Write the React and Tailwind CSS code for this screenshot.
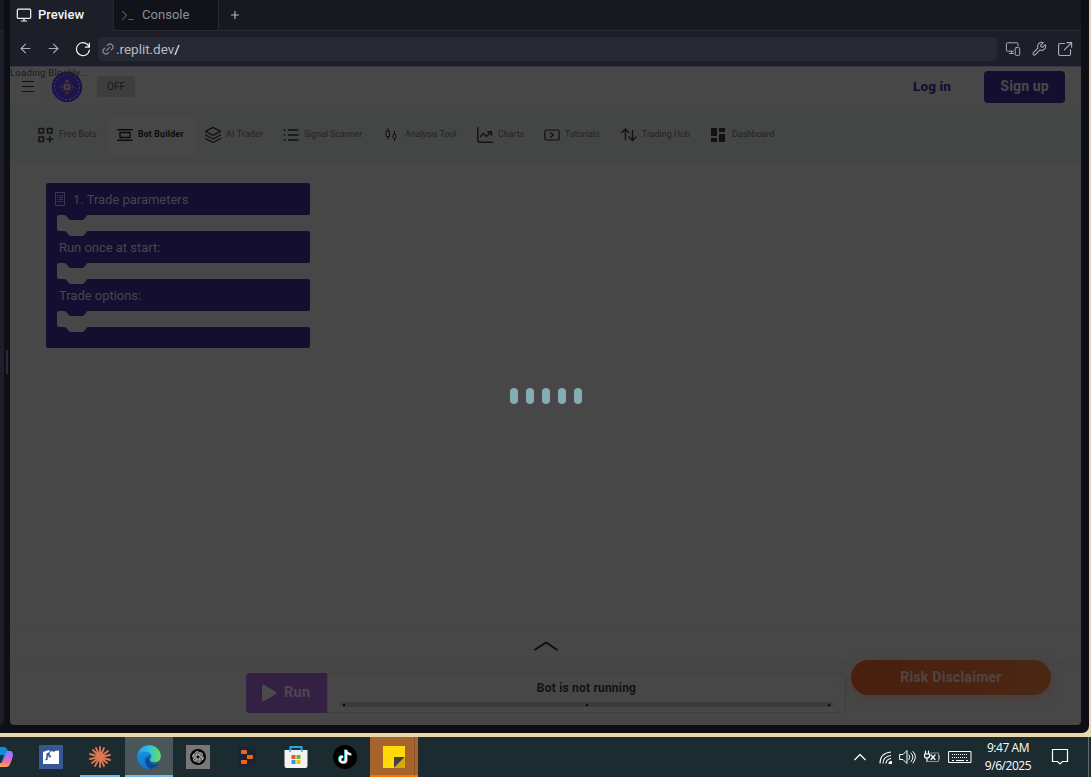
import React from "react";
import { Plus, ArrowLeft, ArrowRight, Link2 } from "lucide-react";

function Svg({ className = "", children, ...rest }) {
  return (
    <svg className={"block shrink-0 " + className} fill="none" stroke="currentColor" strokeLinecap="round" strokeLinejoin="round" {...rest}>
      {children}
    </svg>
  );
}

function TabBar() {
  return (
    <div className="flex h-[31px] shrink-0 border-b border-[#292936] bg-[#181820]">
      <div className="-mb-px flex w-[103px] items-center bg-[#1c1e28] pb-px pl-[6px] text-[#f5f5fa]">
        <Svg className="h-4 w-4" viewBox="0 0 16 16" strokeWidth="1.2">
          <rect x="1.3" y="2.2" width="13.4" height="9.2" rx="1.2" />
          <path d="M8 11.5V14M5.4 14h5.2" />
        </Svg>
        <span className="ml-[6px] text-[13px] leading-4 font-medium">Preview</span>
      </div>
      <div className="flex w-[106px] items-center border-x border-[#292936] bg-[#12121a] pl-[7px] text-[#8f909b]">
        <Svg className="h-4 w-4 text-[#625d43]" viewBox="0 0 16 16" strokeWidth="1.1">
          <path d="m1.5 4.3 4 4-4 4M7.5 12.5h5" />
        </Svg>
        <span className="ml-[5px] text-[13px] leading-4 tracking-[0.03px]">Console</span>
      </div>
      <Plus className="mt-[9px] ml-[10px] h-3 w-3 text-[#b5b6c0]" strokeWidth={2.3} />
    </div>
  );
}

function AddressBar() {
  return (
    <div className="flex h-9 shrink-0 items-center border-b border-[#363948] bg-[#1c1e28] text-[#a9abb6]">
      <ArrowLeft className="ml-[8px] h-[15px] w-[15px]" strokeWidth={1.8} />
      <ArrowRight className="ml-[13px] h-[15px] w-[15px]" strokeWidth={1.8} />
      <Svg className="ml-[14px] h-4 w-4 text-[#f0f0f5]" viewBox="0 0 16 16" strokeWidth="1.2">
        <path d="M14.4 2.2v4h-4M14.1 6A6.5 6.5 0 1 0 14.4 9" />
      </Svg>
      <div className="ml-[7px] flex h-6 w-[899px] items-center rounded-[4px] bg-[#262933] pl-[3px]">
        <Link2 className="h-[14px] w-[14px] -rotate-45 text-[#8c8e99]" strokeWidth={1.9} />
        <span className="ml-px text-[13.5px] leading-4 tracking-[-0.03px] text-[#b7b9c5]">.replit.dev<span className="text-white">/</span></span>
      </div>
      <Svg className="ml-2 h-4 w-4" viewBox="0 0 16 16" strokeWidth="1">
        <path d="M13 5V2.7Q13 1.8 12 1.8H2.3Q1.4 1.8 1.4 2.7v6.6q0 .9.9.9h6M6.5 10.2v2.3M4.5 12.5h4" />
        <rect x="10.2" y="6.6" width="4.5" height="7.8" rx="1" />
      </Svg>
      <Svg className="ml-[10px] h-4 w-4" viewBox="0 0 24 24" strokeWidth="1.6">
        <path d="M14.7 6.3a1 1 0 0 0 0 1.4l1.6 1.6a1 1 0 0 0 1.4 0l3.77-3.77a6 6 0 0 1-7.94 7.94l-6.91 6.91a2.12 2.12 0 0 1-3-3l6.91-6.91a6 6 0 0 1 7.94-7.94l-3.76 3.76z" />
      </Svg>
      <Svg className="ml-[10px] h-4 w-4" viewBox="0 0 16 16" strokeWidth="1.15">
        <path d="M7.5 2.5H3Q1.6 2.5 1.6 4v9q0 1.500 1.500 1.500h9q1.400 0 1.400-1.500V8.500M10 1.600h4.600v4.600M14.300 1.900 7.400 8.800" />
      </Svg>
    </div>
  );
}

function Logo() {
  return (
    <svg viewBox="0 0 32 32" className="block h-8 w-8 shrink-0">
      <circle cx="16" cy="16" r="15.2" fill="#1c144a" />
      <circle cx="16" cy="16" r="12.5" fill="none" stroke="#514c74" strokeWidth="1" strokeDasharray="1.6 2.3" />
      <path d="m16 8.500 7.500 7.500-7.500 7.500-7.500-7.500Z" fill="#221b48" stroke="#332d5a" strokeWidth=".6" />
      <circle cx="16" cy="16" r="3.3" fill="#4c4452" />
      <circle cx="16" cy="16" r="1.8" fill="#4b1021" />
      <circle cx="16" cy="10" r="1.5" fill="#4b4210" />
      <circle cx="16" cy="22.300" r="1.700" fill="#512415" />
      <circle cx="10.4" cy="16" r="1.2" fill="#123d43" />
      <circle cx="21.6" cy="16" r="1.2" fill="#174227" />
    </svg>
  );
}

function AppHeader() {
  return (
    <header className="relative flex h-[39px] shrink-0 items-center border-b border-[#444545] bg-[#474747] pt-px">
      <span className="absolute top-0 left-0 z-10 text-[9.5px] leading-[11px] tracking-[0.25px] whitespace-nowrap text-[#1b1b1e]">Loading Blockly...</span>
      <Svg className="ml-3 h-3 w-3 text-[#111]" viewBox="0 0 12 12" strokeWidth="1" strokeLinecap="butt">
        <path d="M0 .5h12M0 5.5h12M0 10.5h12" />
      </Svg>
      <div className="ml-3 h-[37px] w-px bg-[#434444]" />
      <div className="ml-[4px]"><Logo /></div>
      <span className="ml-[14px] flex h-[21px] w-[38px] items-center justify-center rounded-[3px] bg-[#3c3f3e] text-[10px] text-[#171819]">OFF</span>
      <span className="ml-[778px] w-[40px] text-[13.500px] font-extrabold tracking-[0.12px] whitespace-nowrap text-[#120e30]">Log in</span>
      <span className="ml-[31px] flex h-8 w-[81px] items-center justify-center rounded-[4px] bg-[#140e30] text-[14px] font-extrabold tracking-[0.1px] text-[#474747]">Sign up</span>
    </header>
  );
}

const navItems = [
  { name: "Free Bots", width: "w-[69px]", pos: "ml-7", text: "tracking-[0.05px]", icon: <path d="M1 1.500h4.500V6H1zM9.500 1.500H14V6H9.500zM1 10h4.500v4.500H1zM11.800 9.500v5.500M9 12.200h5.600" strokeWidth="1.500" /> },
  { name: "Bot Builder", width: "w-[88px]", active: true, icon: <path d="M.8 2.700h14.400M.8 13.300h14.400M3 5.500h10v5H3z" strokeWidth="1.400" /> },
  { name: "AI Trader", width: "w-[78px]", text: "tracking-[0.2px]", icon: <path d="m8 .4 7.5 4L8 8.3.5 4.4ZM.5 8 8 12l7.5-4M.5 11.5 8 15.5l7.5-4" strokeWidth="1.4" /> },
  { name: "Signal Scanner", width: "w-[101px]", text: "tracking-[0px]", icon: <path d="M5 3h10.5M5 8h10.5M5 13h10.5M.8 3h1.5M.8 8h1.5M.8 13h1.5" strokeWidth="1.4" strokeLinecap="butt" /> },
  { name: "Analysis Tool", width: "w-[93px]", text: "tracking-[-0.05px]", icon: <><path d="M4 1.500v2.500M4 9.500V12M10.500 4v2.500M10.500 11.500V14" /><rect x="2.500" y="4" width="3" height="5.500" /><rect x="9" y="7" width="3" height="4.500" rx="1" /></> },
  { name: "Charts", width: "w-[67px]", text: "tracking-[0.05px]", icon: <path d="M.8 .8v12.400q0 2 2 2h12.400M3.500 9.500l3-3 3 3 4.500-4.500M11 4.700h3.500v3.500" strokeWidth="1.4" /> },
  { name: "Tutorials", width: "w-[77px]", text: "tracking-[0.05px]", icon: <><rect x=".8" y="3" width="14.400" height="10" rx="2" strokeWidth="1.200" /><path d="m6.500 5.800 3 2.200-3 2.200" strokeWidth="1.200" /></> },
  { name: "Trading Hub", width: "w-[90px]", text: "tracking-[0.03px]", icon: <path d="M4.500 12.500V2L1 5.500M4.500 2 8 5.500M11.500 3.500v10L8 10M11.500 13.500 15 10" strokeWidth="1.400" /> },
  { name: "Dashboard", width: "w-[64px]", text: "tracking-[-0.05px]", icon: <path d="M0 1h6v8H0zM8 1h6v4H8zM0 11h6v4H0zM8 7h6v8H8z" fill="currentColor" stroke="none" /> },
];

function Navigation() {
  return (
    <nav className="flex h-[57px] shrink-0 items-center bg-[#434644]">
      {navItems.map((item) =>
        item.active ? (
          <div key={item.name} className="-ml-px flex h-10 w-[88px] items-center rounded-[4px] bg-[#474747] pl-[11px] text-[#0b0b0b]">
            <Svg className="h-4 w-4" viewBox="0 0 16 16">{item.icon}</Svg>
            <span className="ml-[5px] pt-px text-[8.7px] font-bold tracking-[0.2px] whitespace-nowrap">{item.name}</span>
          </div>
        ) : (
          <div key={item.name} className={"flex items-center " + item.width + " " + (item.pos || (item.name === "AI Trader" ? "ml-[11px]" : ""))}>
            <Svg className="h-4 w-4 text-[#111]" viewBox="0 0 16 16">{item.icon}</Svg>
            <span className={"ml-[5px] pt-px text-[8.8px] whitespace-nowrap text-[#222323] " + item.text}>{item.name}</span>
          </div>
        )
      )}
    </nav>
  );
}

function TradeBlock() {
  return (
    <div className="relative mt-5 ml-9 h-[165px] w-[264px] text-[13px] leading-8 text-[#48464e]">
      <svg className="absolute inset-0 h-full w-full" viewBox="0 0 264 165">
        <path fill="#140e30" d="M2 0H262q2 0 2 2V30q0 2-2 2H42c-2 0-3 5-6 5H25c-3 0-4-5-7-5h-5q-2 0-2 2v12q0 2 2 2h5c3 0 4 5 7 5h11c3 0 4-5 6-5H262q2 0 2 2V78q0 2-2 2H42c-2 0-3 5-6 5H25c-3 0-4-5-7-5h-5q-2 0-2 2v12q0 2 2 2h5c3 0 4 5 7 5h11c3 0 4-5 6-5H262q2 0 2 2v28q0 2-2 2H42c-2 0-3 5-6 5H25c-3 0-4-5-7-5h-5q-2 0-2 2v12q0 2 2 2h5c3 0 4 5 7 5h11c3 0 4-5 6-5H262q2 0 2 2v17q0 2-2 2H2q-2 0-2-2V2Q0 0 2 0Z" />
        <g fill="none" stroke="#474453" strokeWidth=".8"><path d="M9.500 9.500h9v13h-9z" /><path d="M11 12.500h1M11 14.500h1M11 16.500h1M11 18.500h1M13 12.500h4M13 14.500h4M13 16.500h4M13 18.500h4" /></g>
      </svg>
      <div className="relative flex flex-col pt-px">
        <span className="h-12 pl-[27px] tracking-[-0.02px]">1. Trade parameters</span>
        <span className="h-12 pl-[13px] tracking-[-0.03px]">Run once at start:</span>
        <span className="pl-[13px] tracking-[-0.03px]">Trade options:</span>
      </div>
    </div>
  );
}

function Workspace() {
  return (
    <main className="relative h-[465px] shrink-0 overflow-hidden border-b border-[#444545] bg-[#474747]">
      <TradeBlock />
      <div className="absolute top-[225px] left-[500px] flex gap-2">
        {[1, 2, 3, 4, 5].map((i) => <span key={i} className="h-4 w-2 rounded-full bg-[#85acb0]" />)}
      </div>
    </main>
  );
}

function RunPanel() {
  return (
    <footer className="relative flex flex-1 flex-col bg-[#474747]">
      <div className="flex h-[37px] shrink-0 justify-center border-b-2 border-[#434444] pt-[12px]">
        <Svg className="h-3 w-6 text-[#0d0d0d]" viewBox="0 0 24 12" strokeWidth="1.8" strokeLinecap="butt"><path d="m.5 10 11.500-7.500 11.500 7.500" /></Svg>
      </div>
      <div className="mt-[8px] ml-[236px] flex h-10 w-[600px]">
        <div className="flex w-[81px] items-center rounded-l-[4px] bg-[#332042] pl-4 text-[#4b4650]">
          <svg viewBox="0 0 15 18" className="h-[18px] w-[15px]"><path d="M0 1.5Q0 0 1.5.6L14 8q1.2 1 0 2L1.5 17.4Q0 18 0 16.5Z" fill="#4a4a4a" /></svg>
          <span className="ml-[7px] text-[14.500px] font-extrabold tracking-[0.25px]">Run</span>
        </div>
        <div className="flex flex-1 flex-col items-center rounded-r-[4px] border border-[#3e3f3f] pt-[6px]">
          <span className="h-[22px] text-[12px] leading-4 font-bold tracking-[0.2px] text-[#111213]">Bot is not running</span>
          <div className="flex h-[5px] w-[493px] items-center justify-between rounded-full bg-[#3b3b3b] px-[3px]">
            {[1, 2, 3].map((i) => <span key={i} className="h-[2px] w-[2px] bg-[#080808]" />)}
          </div>
        </div>
      </div>
      <div className="absolute top-[32px] left-[841px] flex h-[35px] w-[200px] items-center justify-center rounded-full bg-linear-to-r from-[#491e0f] to-[#492814] text-[14px] font-extrabold tracking-[0.22px] text-[#50443f] shadow-[0_3px_12px_#4b3c37]">Risk Disclaimer</div>
    </footer>
  );
}

function Petals() {
  return <svg viewBox="0 0 24 24" className="h-6 w-6" fill="none" stroke="#dc7655" strokeWidth="1.9" strokeLinecap="round"><path d="m12 12 0-10M12 12l4-9M12 12l8-6M12 12l10-2M12 12l10 3M12 12l7 6M12 12l4 9M12 12l0 10M12 12l-5 9M12 12l-8 6M12 12l-10 2M12 12 2 9M12 12 5 5M12 12 8 3" /></svg>;
}

function Edge() {
  return (
    <svg viewBox="0 0 24 24" className="h-6 w-6">
      <defs>
        <linearGradient id="edgeTop"><stop stopColor="#2596e0" /><stop offset=".5" stopColor="#2ec3df" /><stop offset="1" stopColor="#70dc57" /></linearGradient>
        <linearGradient id="edgeSide" x1="0" x2="0" y1="0" y2="1"><stop stopColor="#1493dc" /><stop offset="1" stopColor="#1872c8" /></linearGradient>
      </defs>
      <circle cx="12" cy="12" r="11.8" fill="#1268ba" />
      <path d="M14 17c-2-1-2-3-.5-4.600l10 1.600-3 5Z" fill="#4a5659" />
      <path d="M.3 11C1 4 6 .2 12 .2c8 0 12 6 11.8 11 0 4-3 6-6.2 6-4 0-6-2-3.500-4.600C16 8.500 8 3.500.3 11Z" fill="url(#edgeTop)" />
      <path d="M.3 11C3 5 13 6 13.800 10.400 9 9.500 6 14 8 18.600c1 2.600 3 4.200 5.200 5C6 24.500-.5 19 .3 11Z" fill="url(#edgeSide)" />
      <path d="M12 12.400c-2 5 5 9 10 5.800-2 3.500-5 5-8.500 5.500C8 21 7 13 12 12.400Z" fill="#0b4990" />
    </svg>
  );
}

function Taskbar() {
  return (
    <div className="flex h-10 shrink-0 bg-[#1b2b2f]">
      <div className="flex w-[27px] items-center overflow-hidden">
        <svg viewBox="0 0 13 24" className="h-6 w-[13px]">
          <defs><linearGradient id="pilot" x1="0" x2="0" y1="0" y2="1"><stop stopColor="#7d80ff" /><stop offset=".4" stopColor="#c36be9" /><stop offset=".75" stopColor="#ff7183" /><stop offset="1" stopColor="#ffad4f" /></linearGradient></defs>
          <path d="M0 2h4q3 0 4 5L3 18H0Z" fill="#108fd9" /><path d="M7 6h3q3 0 3 4-1 6-3 9-1 3-4 3H0v-4q3 0 4-4Z" fill="url(#pilot)" /><path d="M0 10h4l-3 8H0Z" fill="#1b2b2f" />
        </svg>
      </div>
      <div className="flex w-12 items-center justify-center">
        <svg viewBox="0 0 24 24" className="h-6 w-6"><path fill="#375694" d="M0 0h24v24H0z" /><path fill="white" d="m4 7 6-2 1 2 2-1 2 1 1-1 4-.5V19H4Z" /><path d="M7.500 9.500 10 8v2l-2 1v3l-1.500 1M10 12l2-1" stroke="#375694" strokeWidth="1.500" fill="none" /></svg>
      </div>
      <div className="ml-[5px] flex w-10 items-center justify-center border-b-2 border-[#71b7ed] pt-[2px]"><Petals /></div>
      <div className="ml-[5px] flex w-12 items-center justify-center border-b-2 border-[#71b7ed] bg-[#4a5659] pt-[2px]"><Edge /></div>
      <div className="flex w-[49px] items-center justify-center">
        <svg viewBox="0 0 24 24" className="h-6 w-6"><path fill="#777" d="M0 0h24v24H0z" /><circle cx="12" cy="12" r="8" fill="#050505" /><g fill="none" stroke="#ddd" strokeWidth=".7">{[0, 60, 120, 180, 240, 300].map((a) => <path key={a} transform={"rotate(" + a + " 12 12)"} d="M10 13.200V9.600l3.200-1.900a2.400 2.400 0 0 1 3.400 2.700M10 9.600a2.400 2.400 0 0 1 2-2.700" />)}</g></svg>
      </div>
      <div className="flex w-[49px] items-center justify-center">
        <svg viewBox="0 0 20 20" className="h-5 w-5"><rect x="1" width="18" height="20" rx="3" fill="#1c2333" /><path fill="#ef6513" d="M5 3h4q1 0 1 1v3H5q-1 0-1-1V4q0-1 1-1ZM10 8h5q1 0 1 1v2q0 1-1 1h-5ZM5 13h5v3q0 1-1 1H5q-1 0-1-1v-2q0-1 1-1Z" /></svg>
      </div>
      <div className="flex w-[49px] items-center justify-center">
        <svg viewBox="0 0 24 24" className="h-6 w-6"><path d="M6.500 5V2h11v3" fill="none" stroke="#25a8e8" strokeWidth="2" /><path d="M.5 5h23v16q0 2-2 2h-19q-2 0-2-2Z" fill="#f3f3f3" /><path d="M6 4v3M18 4v3" stroke="#25a8e8" strokeWidth="1.500" /><path d="M7.500 10h4v4h-4z" fill="#ef5130" /><path d="M12.500 10h4v4h-4z" fill="#72b31b" /><path d="M7.500 15h4v4h-4z" fill="#18a0df" /><path d="M12.500 15h4v4h-4z" fill="#fbb811" /></svg>
      </div>
      <div className="flex w-[50px] items-center justify-center">
        <svg viewBox="0 0 24 24" className="h-6 w-6"><circle cx="12" cy="12" r="12" fill="#000" /><path d="M13 5v9.500a3 3 0 1 1-3-3M13 5q.5 4 5 4.300" fill="none" stroke="#28dfe4" strokeWidth="2.200" transform="translate(-.8 -.4)" /><path d="M13 5v9.500a3 3 0 1 1-3-3M13 5q.5 4 5 4.300" fill="none" stroke="#f33159" strokeWidth="2.200" transform="translate(.7 .5)" /><path d="M13 5v9.500a3 3 0 1 1-3-3M13 5q.5 4 5 4.300" fill="none" stroke="white" strokeWidth="2.100" /></svg>
      </div>
      <div className="flex w-12 border-b-2 border-[#ff7100] bg-[#a6632c]">
        <div className="flex w-[45px] items-center border-r border-[#8c5024] pl-[13px] pt-[2px]"><svg viewBox="0 0 22 22" className="h-[22px] w-[22px]"><path fill="#ffda08" d="M0 0h22v22H0Z" /><path d="M11 11h11L11 22Z" fill="#414141" /><path d="M22 11v11H11Z" fill="#dba606" /></svg></div>
      </div>
      <div className="ml-auto flex w-[237px] items-center text-white">
        <Svg className="h-[8px] w-3" viewBox="0 0 12 8" strokeWidth="1.200" strokeLinecap="butt"><path d="m.5 7 5.500-5.500L11.500 7" /></Svg>
        <Svg className="ml-[13px] h-[15px] w-[14px]" viewBox="0 0 14 15" strokeWidth="1.100" strokeLinecap="butt"><path d="M1 13.500Q1 3 12 2M4 13.500q0-7 8-8M7 13.500q0-4 5-5" /><path d="M10 13.500q0-2 2.500-2v2Z" fill="currentColor" /></Svg>
        <Svg className="ml-[6px] h-4 w-[18px]" viewBox="0 0 18 16" strokeWidth="1"><path d="M1 5.500h3l4-4v13l-4-4H1zM10 6q2 2 0 4.500M12 4q4 4 0 8.500M14 2.500q5 5 0 11.500" /></Svg>
        <Svg className="ml-[7px] h-4 w-4" viewBox="0 0 16 16" strokeWidth="1"><path d="M1.500 2v3M4.500 2v3M.5 5h5v2q0 2-2.500 2-2.500 0-2.500-2ZM3 9v3.500M7 6l4 4.500M11 6 7 10.500" strokeWidth="1.200" /><path d="M6.500 4h8v8.500H4M15.500 6.500v3.500" stroke="#8a9292" /></Svg>
        <Svg className="ml-[8px] h-4 w-6" viewBox="0 0 24 16" strokeWidth="1"><path d="M1 2.500h22v11H1z" /><path d="M4 5.500h16M4 8.500h16" strokeDasharray="1 1" strokeLinecap="butt" /><path d="M4 11.500h2M8 11.500h8M18 11.500h2" strokeLinecap="butt" /></Svg>
        <div className="ml-[11px] flex w-[50px] flex-col items-center pb-px font-['Open_Sans','Liberation_Sans',sans-serif] text-[12px] leading-[18px] tracking-[-0.45px] whitespace-nowrap"><span>9:47 AM</span><span>9/6/2025</span></div>
        <Svg className="ml-[18px] h-[18px] w-[18px]" viewBox="0 0 18 18" strokeWidth="1.200" strokeLinejoin="miter"><path d="M1.500 1.500h15v12h-5L9 16l-2.500-2.500h-5z" /></Svg>
        <span className="ml-auto h-10 w-px bg-[#626c6e]" /><span className="w-[2px]" />
      </div>
    </div>
  );
}

export default function App() {
  return (
    <div className="flex h-[777px] w-[1091px] flex-col overflow-hidden bg-[#ead7ac] font-[Roboto,'Liberation_Sans',sans-serif]">
      <div className="flex h-[733px] shrink-0">
        <div className="flex h-[733px] w-[1089px] rounded-br-[7px] bg-[#0e0e17]">
          <div className="h-[725px] w-1 rounded-br-[4px] bg-[#1c1e28]"><div className="h-[31px] border-b border-[#292936] bg-[#181820]" /></div>
          <div className="flex w-[6px] justify-center"><span className="mt-[350px] h-6 w-[2px] bg-[#292938]" /></div>
          <div className="flex h-[725px] w-[1071px] flex-col overflow-hidden rounded-b-[4px]">
            <TabBar />
            <AddressBar />
            <AppHeader />
            <Navigation />
            <Workspace />
            <RunPanel />
          </div>
        </div>
      </div>
      <div className="h-1 shrink-0 bg-[#ead7ac]" />
      <Taskbar />
    </div>
  );
}
